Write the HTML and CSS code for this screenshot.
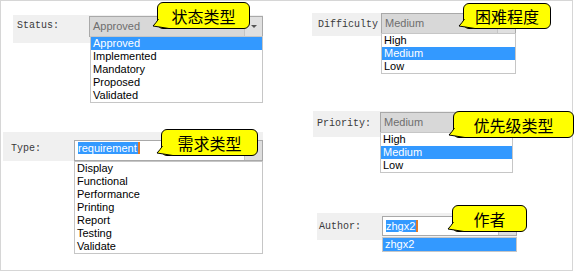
FILE: index.html
```html
<!DOCTYPE html>
<html lang="zh">

<head>
    <meta charset="UTF-8">
    <title>需求属性</title>
    <link rel="stylesheet" href="styles.css">
</head>

<body>
    <div class="frame">
        <div class="column column-left">
            <div class="field field-status">
                <div class="field-label">Status:</div>
                <div class="combo combo-locked">
                    <span class="combo-text">Approved</span>
                    <span class="combo-btn"><i class="arrow"></i></span>
                    <ul class="dropdown">
                        <li class="selected">Approved</li>
                        <li>Implemented</li>
                        <li>Mandatory</li>
                        <li>Proposed</li>
                        <li>Validated</li>
                    </ul>
                </div>
                <div class="callout">
                    <svg class="tail" width="18" height="12" viewBox="0 0 18 12"><path d="M7.5 2 L2 9 L18 11.5 L18 2 Z" fill="#ffff00"/><path d="M7.5 2 Q5 6 2 9 L18 11.5" fill="none" stroke="#000" stroke-width="1"/></svg>
                    状态类型
                </div>
            </div>

            <div class="field field-type">
                <div class="field-label">Type:</div>
                <div class="combo combo-edit">
                    <span class="combo-text"><span class="sel">requirement</span></span>
                    <span class="combo-btn"></span>
                    <ul class="dropdown">
                        <li>Display</li>
                        <li>Functional</li>
                        <li>Performance</li>
                        <li>Printing</li>
                        <li>Report</li>
                        <li>Testing</li>
                        <li>Validate</li>
                    </ul>
                </div>
                <div class="callout">
                    <svg class="tail" width="18" height="12" viewBox="0 0 18 12"><path d="M7.5 2 L2 9 L18 11.5 L18 2 Z" fill="#ffff00"/><path d="M7.5 2 Q5 6 2 9 L18 11.5" fill="none" stroke="#000" stroke-width="1"/></svg>
                    需求类型
                </div>
            </div>
        </div>

        <div class="column column-right">
            <div class="field field-difficulty">
                <div class="field-label">Difficulty</div>
                <div class="combo combo-locked">
                    <span class="combo-text">Medium</span>
                    <span class="combo-btn"><i class="arrow"></i></span>
                    <ul class="dropdown">
                        <li>High</li>
                        <li class="selected">Medium</li>
                        <li>Low</li>
                    </ul>
                </div>
                <div class="callout">
                    <svg class="tail" width="18" height="12" viewBox="0 0 18 12"><path d="M7.5 2 L2 9 L18 11.5 L18 2 Z" fill="#ffff00"/><path d="M7.5 2 Q5 6 2 9 L18 11.5" fill="none" stroke="#000" stroke-width="1"/></svg>
                    困难程度
                </div>
            </div>

            <div class="field field-priority">
                <div class="field-label">Priority:</div>
                <div class="combo combo-locked">
                    <span class="combo-text">Medium</span>
                    <span class="combo-btn"><i class="arrow"></i></span>
                    <ul class="dropdown">
                        <li>High</li>
                        <li class="selected">Medium</li>
                        <li>Low</li>
                    </ul>
                </div>
                <div class="callout">
                    <svg class="tail" width="18" height="12" viewBox="0 0 18 12"><path d="M7.5 2 L2 9 L18 11.5 L18 2 Z" fill="#ffff00"/><path d="M7.5 2 Q5 6 2 9 L18 11.5" fill="none" stroke="#000" stroke-width="1"/></svg>
                    优先级类型
                </div>
            </div>

            <div class="field field-author">
                <div class="field-label">Author:</div>
                <div class="combo combo-edit">
                    <span class="combo-text"><span class="sel">zhgx2</span></span>
                    <span class="combo-btn"></span>
                    <ul class="dropdown">
                        <li class="selected">zhgx2</li>
                    </ul>
                </div>
                <div class="callout">
                    <svg class="tail" width="18" height="12" viewBox="0 0 18 12"><path d="M7.5 2 L2 9 L18 11.5 L18 2 Z" fill="#ffff00"/><path d="M7.5 2 Q5 6 2 9 L18 11.5" fill="none" stroke="#000" stroke-width="1"/></svg>
                    作者
                </div>
            </div>
        </div>
    </div>
</body>

</html>
```

FILE: styles.css
```css
body {
    margin: 0;
    padding: 0;
    background: #fff;
    font-family: 'Liberation Sans', Arial, sans-serif;
}

.frame {
    width: 573px;
    height: 271px;
    box-sizing: border-box;
    border: 1px solid #d6d6d6;
    display: grid;
    grid-template-columns: 299px 1fr;
}

.column {
    display: flex;
    flex-direction: column;
    align-items: flex-start;
}

.field {
    position: relative;
    display: flex;
    background: #f0f0f0;
    box-sizing: border-box;
}

.field-label {
    font-family: 'Liberation Mono', 'Courier New', monospace;
    font-size: 10px;
    line-height: 12px;
    color: #3a3a3a;
    box-sizing: border-box;
    flex: none;
}

/* combo boxes */

.combo {
    position: relative;
    box-sizing: border-box;
    border: 1px solid #a9a9a9;
    font-size: 11px;
    flex: none;
}

.combo-text {
    display: block;
    padding-left: 3px;
    line-height: 19px;
}

.combo-locked {
    background: #d8d8d8;
    color: #6e6e6e;
}

.combo-edit {
    background: #fff;
    color: #000;
}

.combo-btn {
    position: absolute;
    top: 0;
    right: 0;
    bottom: 0;
    width: 17px;
    background: #dedede;
    border-left: 1px solid #c4c4c4;
}

.combo-locked .combo-btn {
    background: #e0e0e0;
}

.arrow {
    position: absolute;
    top: 8px;
    left: 6px;
    border-left: 3px solid transparent;
    border-right: 3px solid transparent;
    border-top: 3px solid #555;
}

.sel {
    background: #3399ff;
    color: #fff;
    border-right: 2px solid #e07a2a;
    padding-right: 1px;
}

.dropdown {
    position: absolute;
    top: 100%;
    left: -1px;
    right: -1px;
    margin: 0;
    padding: 0;
    list-style: none;
    background: #fff;
    border: 1px solid #c6c6c6;
    color: #000;
    z-index: 1;
}

.dropdown li {
    height: 13px;
    line-height: 13px;
    padding-left: 2px;
}

.dropdown li.selected {
    background: #3399ff;
    color: #fff;
}

/* callouts */

.callout {
    position: absolute;
    z-index: 2;
    box-sizing: border-box;
    height: 27px;
    display: flex;
    align-items: center;
    justify-content: center;
    background: #ffff00;
    border: 1px solid #000;
    border-radius: 6px;
    font-family: 'Noto Sans CJK SC', sans-serif;
    font-size: 16px;
    color: #000;
}

.tail {
    position: absolute;
    left: -7px;
    bottom: -1px;
    overflow: visible;
}

/* individual fields */

.field-status {
    margin: 14px 0 0 12px;
    width: 250px;
    height: 28px;
}

.field-status .field-label {
    width: 76px;
    padding: 5px 0 0 4px;
}

.field-status .combo {
    width: 174px;
    height: 21px;
    margin-top: 1px;
}

.field-status .dropdown {
    left: 0;
}

.field-status .callout {
    left: 144px;
    top: -13px;
    width: 93px;
}

.field-type {
    margin: 89px 0 0 2px;
    width: 260px;
    height: 29px;
}

.field-type .field-label {
    width: 71px;
    padding: 11px 0 0 8px;
}

.field-type .combo {
    width: 189px;
    height: 21px;
    margin-top: 8px;
}

.field-type .combo-text {
    padding-left: 3px;
    padding-top: 1px;
    line-height: 13px;
}

.field-type .dropdown {
    top: 20px;
}

.field-type .callout {
    left: 158px;
    top: -3px;
    width: 97px;
}

.field-difficulty {
    margin: 12px 0 0 12px;
    width: 204px;
    height: 23px;
}

.field-difficulty .field-label {
    width: 69px;
    padding: 6px 0 0 6px;
}

.field-difficulty .combo {
    width: 135px;
    height: 21px;
}

.field-difficulty .callout {
    left: 151px;
    top: -10px;
    width: 88px;
    height: 26px;
}

.field-priority {
    margin: 75px 0 0 13px;
    width: 200px;
    height: 26px;
}

.field-priority .field-label {
    width: 67px;
    padding: 7px 0 0 4px;
}

.field-priority .combo {
    width: 133px;
    height: 21px;
    margin-top: 1px;
}

.field-priority .callout {
    left: 140px;
    top: 0;
    width: 121px;
}

.field-author {
    margin: 76px 0 0 17px;
    width: 200px;
    height: 27px;
}

.field-author .field-label {
    width: 65px;
    padding: 8px 0 0 2px;
}

.field-author .combo {
    width: 135px;
    height: 20px;
    margin-top: 3px;
}

.field-author .combo-text {
    padding-left: 3px;
    padding-top: 3px;
    line-height: 13px;
}

.field-author .dropdown {
    top: 20px;
}

.field-author .callout {
    left: 135px;
    top: -8px;
    width: 75px;
}
```
